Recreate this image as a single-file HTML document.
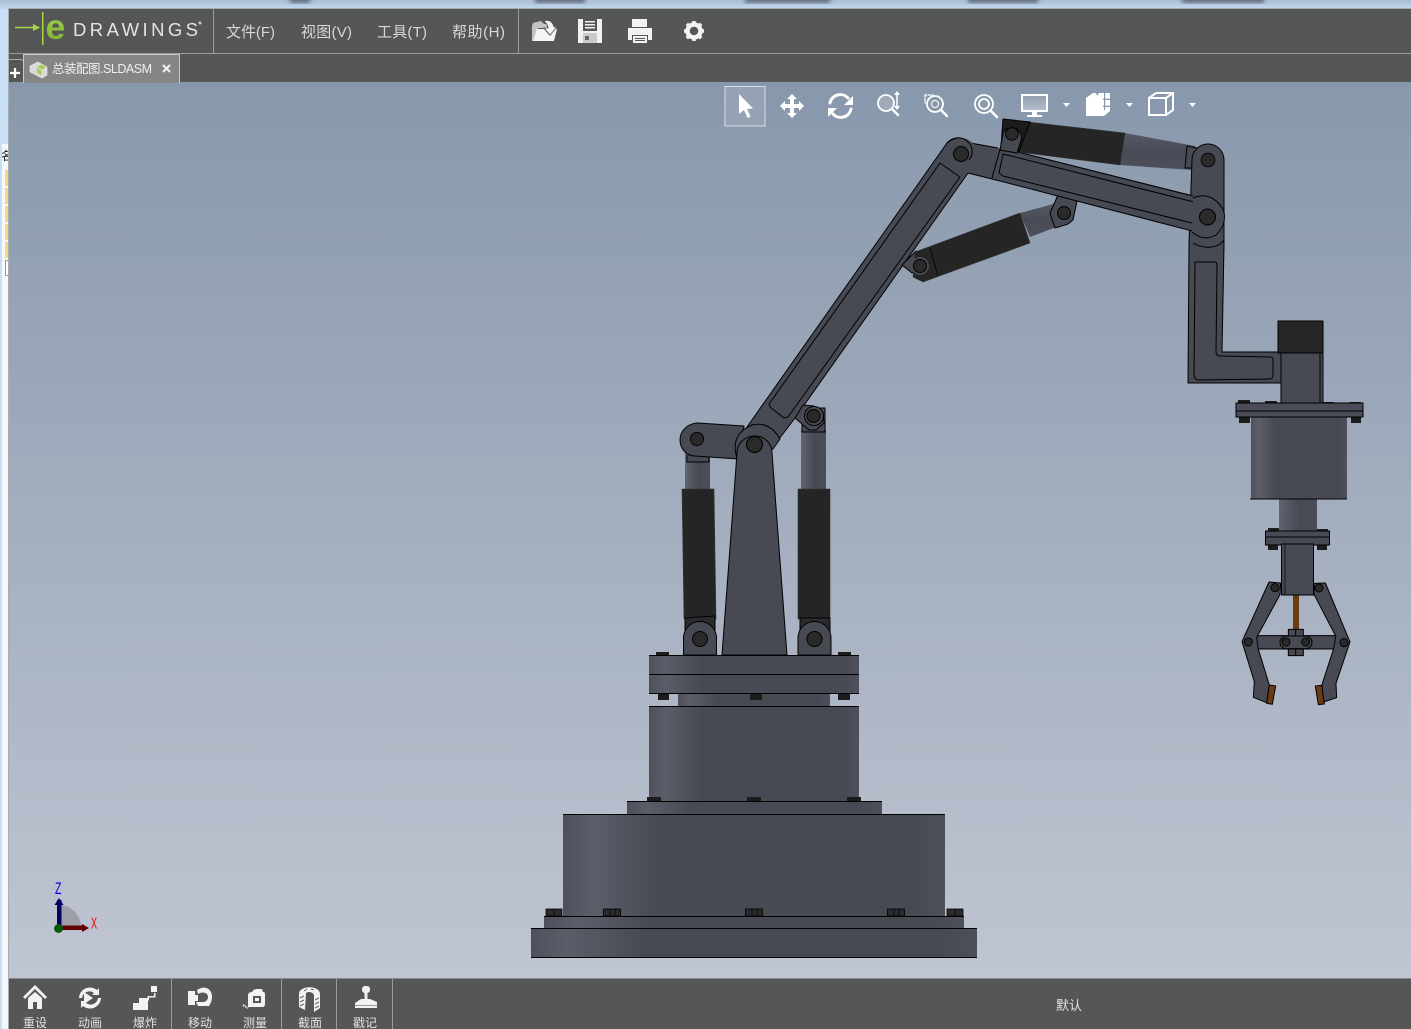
<!DOCTYPE html>
<html><head><meta charset="utf-8"><style>
html,body{margin:0;padding:0;width:1411px;height:1029px;overflow:hidden;background:#fff}
svg{display:block}
text{font-family:"Liberation Sans","Noto Sans CJK SC",sans-serif}
</style></head><body>
<svg width="1411" height="1029" viewBox="0 0 1411 1029" xmlns="http://www.w3.org/2000/svg">
<defs>
<linearGradient id="bg" x1="0" y1="0" x2="0" y2="1"><stop offset="0" stop-color="#8898ac"/><stop offset="1" stop-color="#c0c5d2"/></linearGradient>
<linearGradient id="top" x1="0" y1="0" x2="0" y2="1"><stop offset="0" stop-color="#a9bcd2"/><stop offset="1" stop-color="#c4daf2"/></linearGradient>
<linearGradient id="cyl" x1="0" y1="0" x2="1" y2="0"><stop offset="0" stop-color="#4e515b"/><stop offset=".08" stop-color="#5b5e69"/><stop offset=".25" stop-color="#474a53"/><stop offset=".92" stop-color="#474a53"/><stop offset="1" stop-color="#4d505a"/></linearGradient>
<linearGradient id="rod" x1="0" y1="0" x2="1" y2="0"><stop offset="0" stop-color="#626571"/><stop offset=".2" stop-color="#565964"/><stop offset=".55" stop-color="#474a53"/><stop offset="1" stop-color="#4b4e58"/></linearGradient>
<linearGradient id="rod2" x1="0" y1="0" x2="0" y2="1"><stop offset="0" stop-color="#575a66"/><stop offset=".5" stop-color="#484b55"/><stop offset="1" stop-color="#4d505b"/></linearGradient>
<linearGradient id="scr" x1="0" y1="0" x2="0" y2="1"><stop offset="0" stop-color="#8f9cae"/><stop offset="1" stop-color="#b8bfcc"/></linearGradient>
<linearGradient id="eg" x1="0" y1="0" x2="0" y2="1"><stop offset="0" stop-color="#a6d94a"/><stop offset="1" stop-color="#79aa33"/></linearGradient>
<filter id="b"><feGaussianBlur stdDeviation="2"/></filter>
</defs>

<!-- behind-window -->
<rect width="1411" height="1029" fill="#fff"/>
<rect width="1411" height="9" fill="url(#top)"/>
<rect x="0" y="9" width="8" height="1020" fill="#c9dff5"/>
<g filter="url(#b)" fill="#5e6b7c"><rect x="290" y="-3" width="20" height="6"/><rect x="535" y="-3" width="50" height="6"/><rect x="745" y="-3" width="85" height="6"/><rect x="968" y="-3" width="70" height="6"/><rect x="1182" y="-3" width="82" height="6"/></g>
<rect x="2" y="144" width="6" height="885" fill="#f6f9fc"/>
<text x="1" y="160" font-size="12" fill="#222">名</text>
<g fill="#f9d97c"><rect x="5" y="170" width="3" height="16"/><rect x="5" y="188" width="3" height="16"/><rect x="5" y="206" width="3" height="16"/><rect x="5" y="224" width="3" height="16"/><rect x="5" y="242" width="3" height="16"/></g>
<rect x="5.500" y="260.500" width="4" height="15" fill="#fff" stroke="#999"/>
<rect x="8" y="8" width="1" height="1021" fill="#a7adb5"/>
<rect x="8" y="8" width="1403" height="1" fill="#a7adb5"/>

<!-- viewport -->
<rect x="9" y="82" width="1402" height="896" fill="url(#bg)"/>

<!-- top bars -->
<rect x="9" y="9" width="1402" height="73" fill="#555756"/>
<rect x="9" y="53" width="1402" height="1" fill="#9a9c9b"/>
<rect x="213" y="9" width="1" height="44" fill="#9a9c9b"/>
<rect x="518" y="9" width="1" height="44" fill="#9a9c9b"/>

<!-- logo -->
<path d="M15 27.500H39" stroke="#a4d645" stroke-width="1.500"/><path d="M33 24l7 3.500-7 3.500z" fill="#a4d645"/>
<rect x="42" y="12" width="1.500" height="33" fill="#a4d645"/>
<text transform="translate(45.500 39) scale(1.020 1)" font-size="35" font-weight="700" fill="url(#eg)">e</text>
<text x="73" y="36" font-size="18.500" fill="#e4e4e4" textLength="125">DRAWINGS</text>
<circle cx="200" cy="23" r="1.500" fill="#ccc"/>

<!-- menu -->
<g font-size="15" fill="#d8d8d8">
<text x="226" y="37" textLength="49">文件(F)</text>
<text x="301" y="37" textLength="51">视图(V)</text>
<text x="377" y="37" textLength="50">工具(T)</text>
<text x="452" y="37" textLength="53">帮助(H)</text>
</g>

<!-- top icons -->
<path d="M532 26l1-3 8-2 3 3h3v4h-9l-3 13h-3z" fill="#c4c4c4"/>
<path d="M537 29h7l6 7 5-7h2l-3 12h-21z" fill="#f4f4f4"/>
<path d="M544 21c5-2 9 1 10 6h3l-7 8-6-7h4c0-3-2-5-4-7z" fill="#f4f4f4" stroke="#555756" stroke-width=".8"/>
<g fill="#f2f2f2">
<path fill-rule="evenodd" d="M578 19h24v24h-24zM583 19v12h14V19zM585 21h10v1.500h-10zM585 24h10v1.500h-10zM585 27h10v1.500h-10zM583 33v10h14V33z"/>
<rect x="583" y="33" width="14" height="10" fill="#c9c9c9"/><rect x="585" y="36" width="4" height="4" fill="#666"/>
<path fill-rule="evenodd" d="M632 19h15v8h-15zM628 28h24v12h-4v-5h-16v5h-4z"/>
<path fill-rule="evenodd" d="M633 36h14v7h-14zM635 38v1h10v-1zM635 40v1h10v-1z"/>
</g>
<g transform="translate(694 31)"><circle r="6.500" fill="none" stroke="#f2f2f2" stroke-width="4.500"/><g stroke="#f2f2f2" stroke-width="3.500"><path d="M0-10V-7M0 7v3M-10 0H-7M7 0h3M-7.200-7.200l2.200 2.200M5 5l2.200 2.200M7.200-7.200L5-5M-5 5l-2.200 2.200"/></g></g>

<!-- tabs -->
<path d="M9 59.500h12c1 0 1.500 1 1.500 1.500" stroke="#aaa" fill="none"/>
<rect x="23.500" y="54.500" width="156" height="28" fill="#858585" stroke="#c8c8c8"/>
<rect x="24" y="81" width="155" height="2" fill="#858585"/>
<path d="M10 73h10M15 68v10" stroke="#fff" stroke-width="2.200"/>
<path d="M30 66l8-4 9 5v8l-5 3-12-6z" fill="#d9d9d9" stroke="#eee" stroke-width=".6"/>
<path d="M37 67l5-2.500 4 2.500-4 2.500zM37 68l4.500 2.500v5l-4.500-3z" fill="#a3cf52"/>
<text x="52" y="73" font-size="12.500" fill="#efefef" textLength="100">总装配图.SLDASM</text>
<path d="M163 65l7 7M170 65l-7 7" stroke="#f2f2f2" stroke-width="2"/>

<!-- bottom bar -->
<rect x="9" y="978" width="1402" height="51" fill="#555756"/>
<rect x="9" y="978" width="1402" height="1" fill="#8a8c8c"/>
<rect x="171" y="979" width="1" height="50" fill="#9a9c9b"/>
<rect x="281" y="979" width="1" height="50" fill="#9a9c9b"/>
<rect x="336" y="979" width="1" height="50" fill="#9a9c9b"/>
<rect x="392" y="979" width="1" height="50" fill="#9a9c9b"/>
<g font-size="12" fill="#e2e2e2" text-anchor="middle">
<text x="35" y="1027">重设</text><text x="90" y="1027">动画</text><text x="145" y="1027">爆炸</text>
<text x="200" y="1027">移动</text><text x="255" y="1027">测量</text><text x="310" y="1027">截面</text><text x="365" y="1027">戳记</text>
<text x="1069" y="1010" font-size="13">默认</text>
</g>
<g fill="#f2f2f2">
<path d="M35 985l12 12-2 2-10-10-10 10-2-2zM35 992l7 6v11h-5v-7h-4v7h-5v-11z"/>
<path d="M84 992l9 6-9 6z"/>
<path d="M79 998a11 11 0 0 1 18-8l2-2v7h-7l2-2a7.500 7.500 0 0 0-12 5zM101 998a11 11 0 0 1-18 8l-2 2v-7h7l-2 2a7.500 7.500 0 0 0 12-5z"/>
<rect x="133" y="1003" width="15" height="7"/><rect x="139" y="998" width="9" height="6"/><rect x="151" y="986" width="6" height="6"/><path d="M149 996h5v-3h1.500v4.500H149v3h-1.500V996z"/>
<!-- move -->
<path d="M188 991h7v4h3v6h-3v4h-7z"/>
<path d="M197 990c7-5 15-2 15 7 0 3-1 6-3 9h-11l-2-4h8c3-1 4-3 4-5 0-4-5-6-10-3z"/>
<!-- tape -->
<path fill-rule="evenodd" d="M252 992c1-2 3-3 5-3h5l1 3c2 0 2 1 2 3v9c0 2-1 3-3 3h-14v-12c0-1 1-3 4-3zM253 996v7h8v-7z"/>
<rect x="255" y="998" width="4" height="3"/>
<path d="M243 1005l5 3" stroke="#f2f2f2" stroke-width="2" stroke-dasharray="1.500 1"/>
<!-- section -->
<path d="M299 994c0-9 21-9 21 0v14l-6 4v-17c-1-3-6-4-8-2l-1 17-6-3z"/>
<g stroke="#666" stroke-width="1"><path d="M300 998l4-2M300 1002l4-2M300 1006l4-2M315 1000l4-2M315 1004l4-2M315 1008l4-2M304 991l3-2M311 989l3 1"/></g>
<!-- stamp -->
<rect x="362" y="986" width="8" height="7" rx="3"/><rect x="364.500" y="992" width="3" height="8"/>
<path d="M355 1003l6-4h9l7 3v6h-22z"/>
<rect x="355" y="1005" width="22" height="1" fill="#999"/>
</g>

<!-- triad -->
<path d="M59 905a22 22 0 0 1 22 22H59z" fill="#9c9fa7"/>
<rect x="57" y="900" width="4.500" height="28" fill="#000060"/><path d="M59 898l4.500 7h-9z" fill="#000060"/>
<rect x="59" y="925.500" width="24" height="4.500" fill="#600000"/><path d="M89 928l-7 4v-8z" fill="#600000"/>
<circle cx="58.500" cy="928.500" r="4.500" fill="#0a5a0a"/>
<text transform="translate(55 894) scale(.75 1.200)" font-size="14" fill="#0000e6">Z</text>
<text transform="translate(91 928.500) scale(.65 1.100)" font-size="14" fill="#ee0000">X</text>

<!-- VIEW TOOLBAR -->
<rect x="725" y="86.500" width="40" height="39.500" fill="#95a2b4" stroke="#d9dde3" stroke-width="1"/>
<g fill="#fff">
<path d="M739 94v20l5-4 3.500 8 3-1.500-3.500-7.500 6-.5z"/>
<path d="M792 94l5 5h-3v5h5v-3l5 5-5 5v-3h-5v5h3l-5 5-5-5h3v-5h-5v3l-5-5 5-5v3h5v-5h-3z"/>
</g>
<g fill="none" stroke="#fff" stroke-linecap="round">
<path d="M830 103a10.500 10.500 0 0 1 18-5" stroke-width="3"/><path d="M851 109a10.500 10.500 0 0 1-18 5" stroke-width="3"/>
<circle cx="886" cy="103" r="8" stroke-width="1.800" fill="#a0aab8"/><path d="M892 109l6 6" stroke-width="2.500"/>
<path d="M897 94v14" stroke-width="1.500"/>
<circle cx="935" cy="104" r="8" stroke-width="1.800"/><circle cx="935" cy="104" r="3.500" stroke-width="1"/><path d="M941 110l6 6" stroke-width="2.500"/>
<path d="M925 95h8M925 95v8" stroke-width="1.300" stroke-dasharray="2 1.500"/>
<circle cx="984" cy="104" r="9" stroke-width="1.800"/><circle cx="984" cy="104" r="5" stroke-width="1.800"/><path d="M991 111l6 6" stroke-width="2.500"/>
</g>
<g fill="#fff">
<path d="M853 96v9h-9zM828 117v-9h9z"/>
<path d="M897 91l3 4h-6zM897 110l3-4h-6z"/>
</g>
<rect x="1022" y="95" width="25" height="16" fill="url(#scr)" stroke="#fff" stroke-width="2"/><rect x="1032" y="111" width="5" height="4" fill="#fff"/><rect x="1027" y="115" width="15" height="2" fill="#fff"/>
<g fill="#fff">
<path d="M1063 103h7l-3.500 4zM1126 103h7l-3.500 4zM1189 103h7l-3.500 4z"/>
<path fill-rule="evenodd" d="M1086 98l7-5h3l1 3 2-3h11v18l-6 5h-18z"/>
<path d="M1103 100h8v-1.200h-8zM1103 107h8v-1.200h-8zM1104 93v17h1.200V93z" fill="#8898ac"/>
</g>
<g fill="none" stroke="#fff" stroke-width="2"><path d="M1149 98h17v17h-17zM1149 98l7-5h17v17l-7 5M1166 98l7-5"/></g>

<!-- ROBOT -->
<!-- base -->
<rect x="531" y="928" width="446" height="29.500" fill="url(#cyl)"/>
<rect x="544" y="916" width="420" height="12" fill="url(#cyl)"/>
<rect x="563" y="814" width="382" height="102" fill="url(#cyl)"/>
<rect x="627" y="801" width="255" height="13" fill="url(#cyl)"/>
<rect x="649" y="707" width="210" height="94" fill="url(#cyl)"/>
<rect x="678" y="693" width="152" height="14" fill="url(#cyl)"/>
<rect x="649" y="655" width="210" height="38" fill="url(#cyl)"/>
<g fill="#000">
<rect x="531" y="957" width="446" height="1"/><rect x="531" y="928" width="446" height="1"/>
<rect x="544" y="916" width="420" height="1"/><rect x="563" y="814" width="382" height="1"/><rect x="627" y="801" width="255" height="1"/>
<rect x="649" y="706" width="210" height="1"/><rect x="649" y="693" width="210" height="1"/><rect x="649" y="674" width="210" height="1"/><rect x="649" y="655" width="210" height="1"/>
</g>
<g fill="#2b2b2d" stroke="#000" stroke-width=".8">
<rect x="546" y="909" width="16" height="7"/><rect x="603.500" y="909" width="17" height="7"/><rect x="745.500" y="909" width="17" height="7"/><rect x="887.500" y="909" width="17" height="7"/><rect x="947" y="909" width="16" height="7"/>
</g>
<path d="M554 909v7M610 909v7M615 909v7M752 909v7M757 909v7M894 909v7M899 909v7M955 909v7" stroke="#000" stroke-width=".7"/>
<g fill="#1c1c1c">
<rect x="647" y="797" width="14" height="4"/><rect x="747" y="797" width="14" height="4"/><rect x="847" y="797" width="14" height="4"/>
<rect x="656" y="652" width="13" height="3"/><rect x="750" y="652" width="12" height="3"/><rect x="838" y="652" width="13" height="3"/>
<rect x="658" y="694" width="11" height="6"/><rect x="750" y="694" width="12" height="6"/><rect x="838" y="694" width="12" height="6"/>
</g>
<g stroke="#000" stroke-width="1" stroke-linejoin="round">
<!-- lift cylinders -->
<rect x="685" y="452" width="25" height="37" fill="url(#rod)" stroke="none"/>
<rect x="801" y="430" width="25" height="59" fill="url(#rod)" stroke="none"/>
<path d="M682 489h32l2 130h-32z" fill="#252525" stroke="#333" stroke-width=".6"/>
<path d="M798 489h32v130h-32z" fill="#252525" stroke="#333" stroke-width=".6"/>
<path d="M685 618l30-2v24h-30z" fill="#2b2b2d"/>
<path d="M800 618h30v22h-30z" fill="#2b2b2d"/>
<path d="M683.500 655v-17a16.500 16.500 0 0 1 33 0v17z" fill="#474a53"/>
<path d="M798 655v-17a16.500 16.500 0 0 1 33 0v17z" fill="#474a53"/>
<circle cx="700" cy="639" r="7.500" fill="#2a2a2b"/><circle cx="814.500" cy="639" r="7.500" fill="#2a2a2b"/>

<!-- upper arm -->
<path d="M947 143c5-5 14-6 20-1 5 5 6 12 1 17v14l-173 245-22 29-26-20z" fill="#474a53"/>
<path d="M940 163l20 14-172 240-4 1-14-11-1-3z" fill="#474a53"/>
<!-- lower right bracket -->
<path d="M802 408h23v24h-23z" fill="#474a53"/>
<path d="M795 418l8-13 11 1 9 7 1 10-8 7-7 0z" fill="#474a53"/>
<circle cx="814" cy="416" r="9.500" fill="#474a53"/><circle cx="813.500" cy="416" r="6.500" fill="#2a2a2b"/>

<!-- left link -->
<path d="M687 455v7h22v-7" fill="#474a53"/>
<path d="M698 423l46 3-6 33-43-3c-9 0-15-8-15-16 0-9 8-17 18-17z" fill="#474a53"/>
<circle cx="697" cy="439" r="6.500" fill="#2a2a2b"/>
<path d="M737 458c-5-15 0-27 15-33 12-3 22 3 28 14l-7 10z" fill="#474a53"/>

<!-- pedestal -->
<path d="M722 655l15-202c0-10 8-17 18-17s17 8 17 17l15 202z" fill="#474a53"/>
<circle cx="754.500" cy="444.500" r="8" fill="#2a2a2b"/>

<!-- forearm cylinder 2 -->
<path d="M1020 213l37-10 10 20-37 14z" fill="url(#rod2)" stroke="none"/>
<path d="M1058 195l19 6-4 19-5 4-13 4-5-15z" fill="#474a53"/>
<circle cx="1064" cy="213" r="8.500" fill="#474a53" stroke="none"/><circle cx="1064" cy="213" r="6.500" fill="#2a2a2b"/>
<path d="M902 265l14-14 6 14-10 8z" fill="#474a53"/>
<path d="M915 252l105-39 10 30-107 39-10-5z" fill="#252525" stroke="#333" stroke-width=".6"/>
<path d="M930 248l8 28" fill="none" stroke-width=".8"/>
<circle cx="920" cy="266" r="9" fill="#474a53" stroke="none"/><circle cx="920" cy="266" r="6.500" fill="#2a2a2b"/>

<!-- top cylinder -->
<path d="M1125 133l70 13-3 24-72-5z" fill="url(#rod2)" stroke="none"/>
<path d="M1187 146l10 2v20h-12z" fill="#474a53"/>

<!-- vertical arm -->
<path d="M1192 160a16 16 0 0 1 32 0l0 85-2 107h60v31l-93 0-1 0 1-140z" fill="#474a53"/>
<path d="M1195 262h20c2 0 2 2 2 3l-1 87c0 3 2 4 4 4l50 1c2 0 3 1 3 3v15c0 2-1 4-3 4l-71 1c-3 0-5-2-5-5z" fill="#474a53"/>
<circle cx="1208" cy="160" r="6.800" fill="#2a2a2b"/>

<!-- forearm -->
<path d="M965 142l33 6 20 4 174 43 30 2v36l-22-.5-200-51.500-32-8-20-20z" fill="#474a53" stroke="none"/>
<path d="M965 142l33 6M968 173l32 8 200 52M1018 152l175 44" fill="none"/>
<path d="M1003 154l195 49 2 3-4 18-193-48-4-3z" fill="#474a53"/>
<path d="M1001 146l-9 32" fill="none"/>
<!-- pivot hub on right -->
<path d="M1193 198c15-6 26 2 31 14 2 10-2 17-8 23-9 5-17 3-24-3" fill="#474a53"/>
<path d="M1193 243c10 6 25 6 31-3" fill="none"/>
<circle cx="1207.500" cy="217" r="8" fill="#2a2a2b"/>
<!-- upper pivot -->
<circle cx="961" cy="154" r="16" fill="#474a53" stroke="none"/>
<path d="M947 143c5-6 14-7 20-2 6 5 7 13 2 19" fill="none"/>
<circle cx="961" cy="154" r="7.500" fill="#2a2a2b"/>

<!-- top bracket / dark cylinder -->
<path d="M1028 122l97 11-5 32-102-13z" fill="#252525" stroke="#333" stroke-width=".6"/>
<path d="M1003 119l27 3-11 30-18-5z" fill="#1c1c1e"/>
<path d="M1000 150l3-17c3-6 12-7 16-2 3 4 3 8 1 12l-3 10z" fill="#474a53"/>
<circle cx="1012" cy="134" r="6.300" fill="#2a2a2b"/>
</g>

<!-- tool end -->
<g stroke="#000" stroke-width="1" stroke-linejoin="round">
<rect x="1278" y="321" width="45" height="32" fill="#262626"/>
<rect x="1281" y="353" width="42" height="51" fill="#474a53"/>
<path d="M1320 353v51" stroke="#000" fill="none"/>
<g stroke="none" fill="#1d1d1d">
<rect x="1238" y="400" width="12" height="3"/><rect x="1265" y="401" width="12" height="2"/><rect x="1323" y="402" width="11" height="2"/><rect x="1350" y="402" width="11" height="2"/>
<rect x="1239" y="417" width="11" height="6"/><rect x="1268" y="417" width="10" height="6"/><rect x="1324" y="417" width="10" height="6"/><rect x="1351" y="417" width="10" height="6"/>
<rect x="1268" y="528" width="11" height="3"/><rect x="1317" y="529" width="11" height="3"/><rect x="1268" y="545" width="10" height="5"/><rect x="1317" y="545" width="10" height="5"/>
</g>
<rect x="1251" y="416" width="96" height="83" fill="url(#cyl)" stroke="none"/>
<path d="M1250 499h97" fill="none"/>
<rect x="1279" y="499.500" width="38" height="31" fill="url(#rod)" stroke="none"/>
<rect x="1236" y="403" width="127" height="14" fill="#4a4d57"/>
<path d="M1236 411h127" fill="none"/>
<rect x="1265.500" y="531" width="64" height="14" fill="#474a53"/>
<path d="M1266 537h64" fill="none"/>
<rect x="1293" y="595" width="6" height="36" fill="#6b3b12" stroke="none"/>
<!-- gripper -->
<g transform="translate(1230 570) scale(.3333)" stroke-width="3">
<rect x="80" y="197" width="240" height="40" fill="#474a53"/>
<rect x="175" y="178" width="45" height="20" fill="#474a53"/><rect x="175" y="237" width="45" height="20" fill="#474a53"/>
<path d="M197 178v20M197 237v20" fill="none"/>
<rect x="150" y="198" width="96" height="38" rx="19" fill="#474a53"/>
<circle cx="168" cy="216" r="12" fill="#2a2a2b"/><circle cx="227" cy="216" r="12" fill="#2a2a2b"/>
<path d="M117 36l35 3-2 35-70 128 5 36 33 107-8 53-40-16 3-47-37-120z" fill="#474a53"/>
<path d="M118 345l19 3-10 55-17-3z" fill="#6b3b12"/>
<path d="M286 39l-34 1 0 33 65 125-6 38-35 108 4 52 40-13-2-43 42-124z" fill="#474a53"/>
<path d="M256 348l19-2 8 56-18 2z" fill="#6b3b12"/>
<circle cx="135" cy="53" r="12" fill="#2a2a2b"/><circle cx="267" cy="54" r="12" fill="#2a2a2b"/>
<circle cx="55" cy="216" r="12" fill="#2a2a2b"/><circle cx="342" cy="218" r="12" fill="#2a2a2b"/>
</g>
<rect x="1281.500" y="544" width="32" height="51" fill="#474a53"/>
<path d="M1285 544v51" fill="none" stroke-width=".7"/>
</g>
</svg>
</body></html>
